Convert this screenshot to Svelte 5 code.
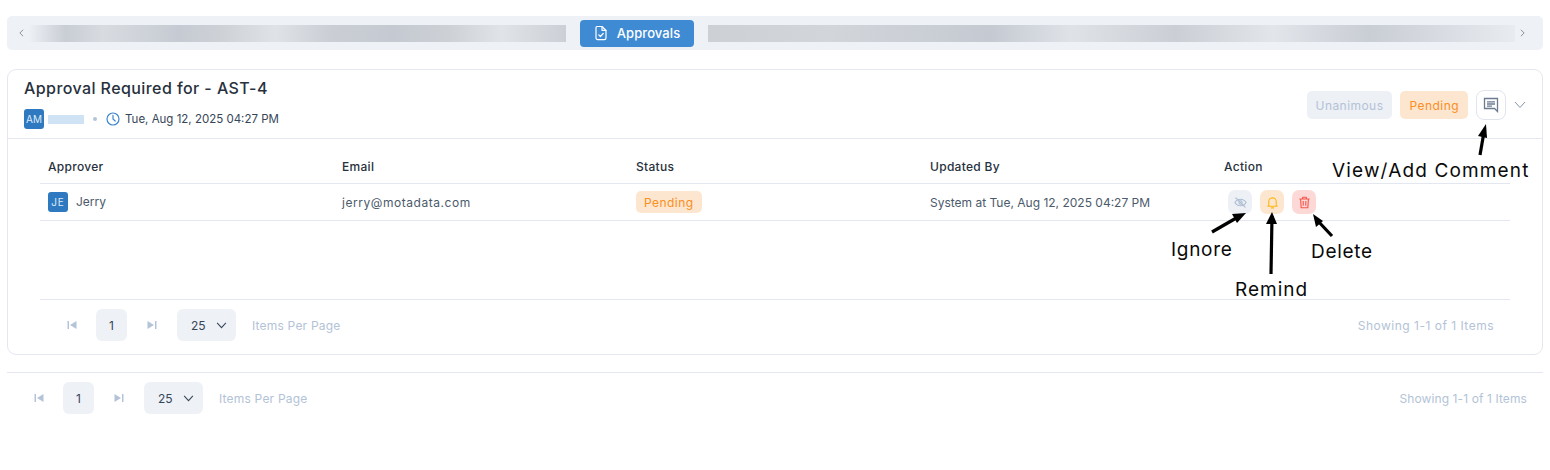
<script>
  const columns = [
    { label: 'Approver', width: 294 },
    { label: 'Email', width: 294 },
    { label: 'Status', width: 294 },
    { label: 'Updated By', width: 294 },
    { label: 'Action', width: 294 }
  ];
</script>

{#snippet pager(showingClass)}
  <div class="pager-left">
    <svg class="step" viewBox="0 0 10 10" width="10" height="10"><path d="M0.500 1h1.500v8H0.500zM9.500 1v8L3 5z" fill="#b4c4d8"/></svg>
    <span class="page">1</span>
    <svg class="step" viewBox="0 0 10 10" width="10" height="10"><path d="M0.500 1v8L7 5zM8 1h1.500v8H8z" fill="#b4c4d8"/></svg>
    <span class="size">25
      <svg viewBox="0 0 12 8" width="11" height="7"><path d="M1 1l5 5.500L11 1" fill="none" stroke="#364658" stroke-width="1.200"/></svg>
    </span>
    <span class="muted per">Items Per Page</span>
  </div>
  <span class="muted {showingClass}">Showing 1-1 of 1 Items</span>
{/snippet}

<main class="page-root">
  <nav class="tabs">
    <svg class="tab-chev" viewBox="0 0 6 10" width="5" height="8"><path d="M5 1L1 5l4 4" fill="none" stroke="#7b8794" stroke-width="1.100"/></svg>
    <div class="blur blur-left"></div>
    <button class="tab-active">
      <svg viewBox="0 0 14 16" width="14" height="16" fill="none" stroke="#fff" stroke-width="1.200" stroke-linejoin="round" stroke-linecap="round">
        <path d="M3 1.500h5l4 4v7.500a1.600 1.600 0 0 1-1.600 1.600H3.600A1.600 1.600 0 0 1 2 13V2.600A1.100 1.100 0 0 1 3 1.500z"/>
        <path d="M8 1.500v3.800h4"/>
        <path d="M4.800 9.800l1.600 1.700 2.800-3"/>
      </svg>
      Approvals
    </button>
    <div class="blur blur-right"></div>
    <svg class="tab-chev" viewBox="0 0 6 10" width="5" height="8"><path d="M1 1l4 4-4 4" fill="none" stroke="#7b8794" stroke-width="1.100"/></svg>
  </nav>

  <section class="card">
    <header class="card-head">
      <div>
        <h1>Approval Required for - AST-4</h1>
        <div class="meta">
          <span class="avatar">AM</span>
          <span class="hidden-name"></span>
          <span class="dot"></span>
          <svg viewBox="0 0 14 14" width="14" height="14" fill="none" stroke="#3d86cf" stroke-width="1.200" stroke-linecap="round"><circle cx="7" cy="7" r="6"/><path d="M7 3.400V7l2.200 2"/></svg>
          <span class="when">Tue, Aug 12, 2025 04:27 PM</span>
        </div>
      </div>
      <div class="head-actions">
        <span class="chip chip-grey">Unanimous</span>
        <span class="chip chip-orange">Pending</span>
        <button class="comment" aria-label="Comment">
          <svg viewBox="0 0 16 16" width="16" height="16" fill="none" stroke="#6b7c90" stroke-width="1.300"><path d="M1.500 1.500h13v9.500v3.500l-3-3H1.500z"/><path d="M4 4.800h8M4 7h8M4 9.200h5"/></svg>
        </button>
        <svg class="collapse" viewBox="0 0 12 8" width="12" height="8"><path d="M1 1l5 5.500L11 1" fill="none" stroke="#8696a8" stroke-width="1"/></svg>
      </div>
    </header>

    <div class="table-wrap">
      <div class="row head-row">
        {#each columns as c}
          <span class="cell" style="width:{c.width}px">{c.label}</span>
        {/each}
      </div>
      <div class="row body-row">
        <span class="cell person" style="width:{columns[0].width}px"><span class="avatar je">JE</span><span class="jerry">Jerry</span></span>
        <span class="cell mail" style="width:{columns[1].width}px">jerry@motadata.com</span>
        <span class="cell" style="width:{columns[2].width}px"><span class="chip chip-orange small">Pending</span></span>
        <span class="cell" style="width:{columns[3].width}px">System at Tue, Aug 12, 2025 04:27 PM</span>
        <span class="cell actions" style="width:{columns[4].width}px">
          <span class="act act-grey">
            <svg viewBox="0 0 14 14" width="13" height="13" fill="none" stroke="#a9bbd2" stroke-width="1.100" stroke-linecap="round"><path d="M1 7c1.400-2.400 3.400-3.600 6-3.600S11.600 4.600 13 7c-1.400 2.400-3.400 3.600-6 3.600S2.400 9.400 1 7z"/><circle cx="7" cy="7" r="1.800"/><path d="M2 2l10 10"/></svg>
          </span>
          <span class="act act-orange">
            <svg viewBox="0 0 14 14" width="13" height="13" fill="none" stroke="#fdb714" stroke-width="1.200" stroke-linejoin="round" stroke-linecap="round"><path d="M3 10V6a4 4 0 0 1 8 0v4l1 1H2z"/><path d="M5.800 12.800h2.400"/></svg>
          </span>
          <span class="act act-red">
            <svg viewBox="0 0 14 14" width="13" height="13" fill="none" stroke="#f5554a" stroke-width="1.200" stroke-linejoin="round"><path d="M1.500 3.200h11M5 3V1.300h4V3M2.800 3.200l.6 9.500h7.200l.6-9.500"/><path d="M5.600 5.500v5M8.400 5.500v5"/></svg>
          </span>
        </span>
      </div>
      <div class="spacer"></div>
      <div class="pager inner">
        {@render pager('show')}
      </div>
    </div>
  </section>

  <div class="pager outer">
    {@render pager('show-outer')}
  </div>

  <svg class="arrows" viewBox="0 0 1550 470" width="1550" height="470" aria-hidden="true">
    <g stroke="#000" stroke-width="3.200" fill="#000">
      <path d="M1480 155l4-23" fill="none"/><path d="M1486 124l-8 12 9 2z" stroke-width="0"/>
      <path d="M1212 232l26-15" fill="none"/><path d="M1246 213l-14 1 5 9z" stroke-width="0"/>
      <path d="M1271 274l1-58" fill="none"/><path d="M1272 212l-6 12h11z" stroke-width="0"/>
      <path d="M1332 236l-15-16" fill="none"/><path d="M1313 214l3 13 7-6z" stroke-width="0"/>
    </g>
  </svg>
  <span class="note n-comment">View/Add Comment</span>
  <span class="note n-ignore">Ignore</span>
  <span class="note n-remind">Remind</span>
  <span class="note n-delete">Delete</span>
</main>

<style>
  :global(body) { margin: 0; background: #fff; }
  .page-root {
    position: relative;
    width: 1550px;
    height: 470px;
    box-sizing: border-box;
    padding: 16px 7px 0;
    font-family: Inter, "Noto Sans", sans-serif;
    font-size: 12px;
    color: #364658;
    overflow: hidden;
  }
  .tabs {
    display: flex;
    align-items: center;
    height: 34px;
    background: #eef1f6;
    border-radius: 5px;
    padding: 0 15px 0 12px;
    box-sizing: border-box;
  }
  .tab-chev { flex: none; }
  .blur { height: 17px; }
  .blur-left {
    width: 538px;
    margin-left: 4px;
    background: linear-gradient(90deg, #eef1f6 0%, #c9cdd4 7%, #d8dbe0 14%, #c6cbd3 28%, #ced1d6 36%, #dfe2e7 46%, #cbced4 56%, #c5cad2 68%, #cdd0d5 78%, #e0e3e8 88%, #ccd0d6 100%);
  }
  .blur-right {
    width: 807px;
    background: linear-gradient(90deg, #cdd0d5 0%, #d2d5da 15%, #c5cad2 35%, #dfe2e7 45%, #cbced4 58%, #e2e5ea 70%, #c9cdd4 82%, #e8ebf0 100%);
    margin-right: 5px;
  }
  .tab-active {
    display: flex;
    align-items: center;
    justify-content: center;
    gap: 9px;
    width: 114px;
    height: 27px;
    margin: 0 14px;
    padding: 0;
    border: 0;
    border-radius: 4px;
    background: #3f8bd3;
    color: #fff;
    font: 500 13px Inter, sans-serif;
    letter-spacing: 0.1px;
  }
  .card {
    margin-top: 19px;
    height: 286px;
    box-sizing: border-box;
    border: 1px solid #e3e8f0;
    border-radius: 9px;
  }
  .card-head {
    display: flex;
    justify-content: space-between;
    align-items: flex-start;
    height: 69px;
    box-sizing: border-box;
    padding: 8px 16px 0;
    border-bottom: 1px solid #e3e8f0;
  }
  h1 {
    margin: 0;
    font-size: 16px;
    line-height: 20px;
    font-weight: 500;
    color: #27313d;
    letter-spacing: 0.42px;
  }
  .meta {
    display: flex;
    align-items: center;
    margin-top: 11px;
    height: 20px;
    color: #364658;
  }
  .when { font-size: 11.500px; }
  .avatar {
    display: inline-flex;
    align-items: center;
    justify-content: center;
    width: 20px;
    height: 20px;
    border-radius: 3px;
    background: #2f79c0;
    color: #dcebf8;
    font-size: 10px;
    flex: none;
  }
  .avatar.je { letter-spacing: 1px; }
  .hidden-name {
    width: 36px;
    height: 9px;
    margin: 0 9px 0 4px;
    background: #cfe3f5;
  }
  .dot {
    width: 4px;
    height: 4px;
    border-radius: 50%;
    background: #b4c4d8;
    margin-right: 9px;
  }
  .meta svg { margin-right: 5px; }
  .head-actions {
    display: flex;
    align-items: center;
    padding-top: 12px;
  }
  .chip {
    display: inline-flex;
    align-items: center;
    height: 28px;
    padding: 0 9px;
    border-radius: 5px;
    font-size: 12px;
    letter-spacing: 0.45px;
  }
  .chip-grey { background: #edf0f5; color: #b3c3d7; margin-right: 8px; }
  .chip-orange { background: #fde6cf; color: #fa8e1e; }
  .chip.small { height: 22px; padding: 0 8px; }
  .comment {
    display: flex;
    align-items: center;
    justify-content: center;
    width: 30px;
    height: 30px;
    margin: 0 8px;
    padding: 0;
    border: 1px solid #dfe5ee;
    border-radius: 8px;
    background: #fff;
  }
  .table-wrap {
    margin: 0 32px;
    display: flex;
    flex-direction: column;
  }
  .row { display: flex; align-items: center; box-sizing: border-box; border-bottom: 1px solid #e3e8f0; }
  .cell { display: flex; align-items: center; padding-left: 8px; box-sizing: border-box; }
  .head-row { height: 45px; padding-top: 10px; color: #27313d; font-weight: 500; letter-spacing: 0.3px; }
  .body-row { height: 37px; color: #4b5a6b; }
  .mail { letter-spacing: 0.55px; }
  .person { gap: 8px; }
  .jerry { position: relative; top: -1px; }
  .actions { gap: 8px; padding-left: 12px; }
  .act {
    display: flex;
    align-items: center;
    justify-content: center;
    width: 24px;
    height: 24px;
    border-radius: 7px;
  }
  .act-grey { background: #edf0f5; }
  .act-orange { background: #fde6cf; }
  .act-red { background: #fcd9d6; }
  .spacer { height: 79px; border-bottom: 1px solid #e3e8f0; box-sizing: border-box; flex: none; }
  .pager {
    display: flex;
    align-items: center;
    justify-content: space-between;
  }
  .pager.inner { height: 50px; padding: 0 16px 0 27px; }
  .pager.outer {
    margin-top: 17px;
    height: 50px;
    border-top: 1px solid #e3e8f0;
    padding: 0 16px 0 27px;
  }
  .pager-left { display: flex; align-items: center; }
  .page {
    display: flex;
    align-items: center;
    justify-content: center;
    width: 31px;
    height: 32px;
    margin: 0 20px 0 19px;
    background: #eef1f6;
    border-radius: 6px;
  }
  .size {
    display: flex;
    align-items: center;
    justify-content: space-between;
    width: 59px;
    height: 32px;
    box-sizing: border-box;
    padding: 0 9px 0 14px;
    margin-left: 20px;
    background: #eef1f6;
    border-radius: 6px;
  }
  .muted { color: #b3c3d7; }
  .per { margin-left: 16px; letter-spacing: 0.2px; }
  .show { letter-spacing: 0.5px; }
  .show-outer { letter-spacing: 0.1px; }
  .arrows { position: absolute; left: 0; top: 0; pointer-events: none; }
  .note {
    position: absolute;
    font-size: 19px;
    line-height: 24px;
    letter-spacing: 0.7px;
    color: #0a0a0a;
    white-space: nowrap;
  }
  .n-comment { left: 1332px; top: 159px; letter-spacing: 1.150px; }
  .n-ignore { left: 1171px; top: 238px; }
  .n-remind { left: 1235px; top: 278px; letter-spacing: 1px; }
  .n-delete { left: 1311px; top: 240px; }
</style>
